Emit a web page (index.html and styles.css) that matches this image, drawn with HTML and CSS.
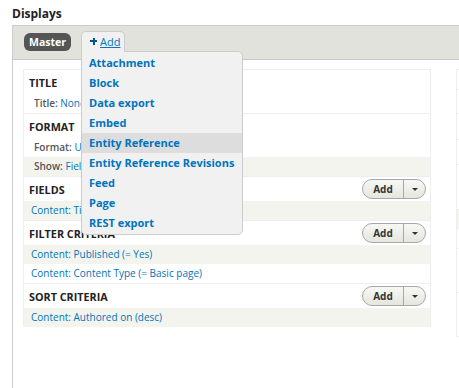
FILE: index.html
```html
<!DOCTYPE html>
<html lang="en">
<head>
    <meta charset="UTF-8">
    <meta name="viewport" content="width=device-width, initial-scale=1.0">
    <title>Displays</title>
    <link rel="stylesheet" href="styles.css">
</head>
<body>
    <div class="page">
        <h2 class="page-title">Displays</h2>

        <div class="displays">
            <div class="display-tabs">
                <span class="tab-master">Master</span>
                <div class="add-wrap">
                    <a href="#" class="add-tab"><span class="plus"></span><span class="add-label">Add</span></a>
                    <ul class="add-menu">
                        <li><a href="#">Attachment</a></li>
                        <li><a href="#">Block</a></li>
                        <li><a href="#">Data export</a></li>
                        <li><a href="#">Embed</a></li>
                        <li class="is-hover"><a href="#">Entity Reference</a></li>
                        <li><a href="#">Entity Reference Revisions</a></li>
                        <li><a href="#">Feed</a></li>
                        <li><a href="#">Page</a></li>
                        <li><a href="#">REST export</a></li>
                    </ul>
                </div>
            </div>

            <div class="display-body">
                <div class="column">
                    <div class="section">
                        <div class="section-head"><span>Title</span></div>
                        <div class="setting"><span class="label">Title:</span> <a href="#">None</a></div>
                    </div>
                    <div class="section">
                        <div class="section-head"><span>Format</span></div>
                        <div class="setting"><span class="label">Format:</span> <a href="#">Unformatted list</a></div>
                        <div class="setting alt"><span class="label">Show:</span> <a href="#">Fields</a></div>
                    </div>
                    <div class="section">
                        <div class="section-head">
                            <span>Fields</span>
                            <div class="btn-group"><span class="btn-add">Add</span><span class="btn-toggle"><i class="caret"></i></span></div>
                        </div>
                        <div class="row alt"><a href="#">Content: Title</a></div>
                    </div>
                    <div class="section">
                        <div class="section-head">
                            <span>Filter criteria</span>
                            <div class="btn-group"><span class="btn-add">Add</span><span class="btn-toggle"><i class="caret"></i></span></div>
                        </div>
                        <div class="row alt"><a href="#">Content: Published (= Yes)</a></div>
                        <div class="row"><a href="#">Content: Content Type (= Basic page)</a></div>
                    </div>
                    <div class="section last">
                        <div class="section-head">
                            <span>Sort criteria</span>
                            <div class="btn-group"><span class="btn-add">Add</span><span class="btn-toggle"><i class="caret"></i></span></div>
                        </div>
                        <div class="row alt"><a href="#">Content: Authored on (desc)</a></div>
                    </div>
                </div>

                <div class="column side">
                    <div class="side-row h20"></div>
                    <div class="side-row h24"></div>
                    <div class="side-row h26"></div>
                    <div class="side-row h25"></div>
                    <div class="side-row h45"></div>
                    <div class="side-row alt h18"></div>
                    <div class="side-row h20"></div>
                    <div class="side-row h44"></div>
                    <div class="side-row h44"></div>
                </div>
            </div>
        </div>
    </div>
</body>
</html>
```

FILE: styles.css
```css
html, body {
    margin: 0;
    overflow: hidden;
}
body {
    font-family: "Open Sans", "Noto Sans", sans-serif;
    font-size: 10px;
    color: #222;
    background: #fff;
}
a {
    color: #0074bd;
    text-decoration: none;
}
ul {
    list-style: none;
    margin: 0;
    padding: 0;
}
.page {
    padding: 6px 0 0 12px;
}
.page-title {
    margin: 0 0 3px;
    font-size: 12px;
    line-height: 16px;
    font-weight: bold;
    color: #222;
}
.displays {
    width: 700px;
    min-height: 400px;
    border-top: 1px solid #ccc;
    border-left: 1px solid #ccc;
}
.display-tabs {
    display: flex;
    align-items: flex-end;
    gap: 10px;
    height: 26px;
    padding: 0 11px 7px;
    background: #e1e2dc;
    border-bottom: 1px solid #c9c9c5;
}
.tab-master {
    box-sizing: border-box;
    width: 47px;
    height: 18px;
    line-height: 18px;
    margin-bottom: 1px;
    text-align: center;
    border-radius: 6px;
    background: #555;
    color: #fff;
    font-weight: bold;
    font-size: 10.5px;
}
.add-wrap {
    position: relative;
}
.add-tab {
    position: relative;
    z-index: 3;
    display: flex;
    align-items: center;
    gap: 3px;
    box-sizing: border-box;
    width: 44px;
    height: 21px;
    padding: 0 0 2px 8px;
    border: 1px solid #ccc;
    border-bottom: 0;
    border-radius: 5px 5px 0 0;
    background: #f1f1f1;
    font-size: 11px;
}
.add-label {
    text-decoration: underline;
}
.plus {
    position: relative;
    flex-shrink: 0;
    width: 7px;
    height: 7px;
}
.plus::before,
.plus::after {
    content: "";
    position: absolute;
    background: #00558a;
}
.plus::before {
    left: 0;
    top: 2.5px;
    width: 7px;
    height: 2px;
}
.plus::after {
    left: 2.5px;
    top: 0;
    width: 2px;
    height: 7px;
}
.add-menu {
    position: absolute;
    z-index: 2;
    top: 20px;
    left: 0;
    width: 160px;
    padding: 1px 0 1px;
    border: 1px solid #ccc;
    border-radius: 0 5px 5px 5px;
    background: #f1f1f1;
}
.add-menu li a {
    display: block;
    height: 20px;
    line-height: 20px;
    padding: 0 7px;
    font-weight: bold;
    font-size: 11px;
    white-space: nowrap;
}
.add-menu li.is-hover {
    background: #ddd;
}
.display-body {
    display: flex;
    align-items: flex-start;
    gap: 25px;
    padding: 9px 0 0 10px;
}
.column {
    flex-shrink: 0;
    box-sizing: border-box;
    width: 408px;
    border: 1px solid #eee;
    border-bottom: 0;
}
.section {
    border-bottom: 1px solid #eee;
}
.section.last {
    border-bottom: 0;
}
.section-head {
    display: flex;
    align-items: center;
    justify-content: space-between;
    height: 24px;
    padding: 0 4px 0 5px;
    font-weight: bold;
    font-size: 10.8px;
    text-transform: uppercase;
    color: #222;
}
.setting,
.row {
    height: 19px;
    line-height: 19px;
    white-space: nowrap;
    overflow: hidden;
}
.setting {
    padding-left: 10px;
}
.row {
    padding-left: 7px;
}
.alt {
    background: #f3f4ee;
}
.label {
    font-weight: 600;
    color: #555;
}
.btn-group {
    display: flex;
    height: 18px;
    border: 1px solid #a8a8a8;
    border-radius: 10px;
    overflow: hidden;
    background: linear-gradient(#f7f7f4, #e6e6e0);
}
.btn-add {
    width: 40px;
    line-height: 18px;
    text-align: center;
    font-weight: bold;
    font-size: 10px;
    color: #333;
    text-transform: none;
    border-right: 1px solid #a8a8a8;
}
.btn-toggle {
    display: flex;
    align-items: center;
    justify-content: center;
    width: 21px;
}
.caret {
    width: 0;
    height: 0;
    border-left: 3px solid transparent;
    border-right: 3px solid transparent;
    border-top: 3px solid #333;
}
.side {
    width: 200px;
    border-bottom: 1px solid #eee;
}
.side-row {
    border-bottom: 1px solid #eee;
}
.side-row:last-child {
    border-bottom: 0;
}
.h18 { height: 18px; }
.h20 { height: 19px; }
.h24 { height: 23px; }
.h25 { height: 24px; }
.h26 { height: 25px; }
.h44 { height: 43px; }
.h45 { height: 44px; }
```
